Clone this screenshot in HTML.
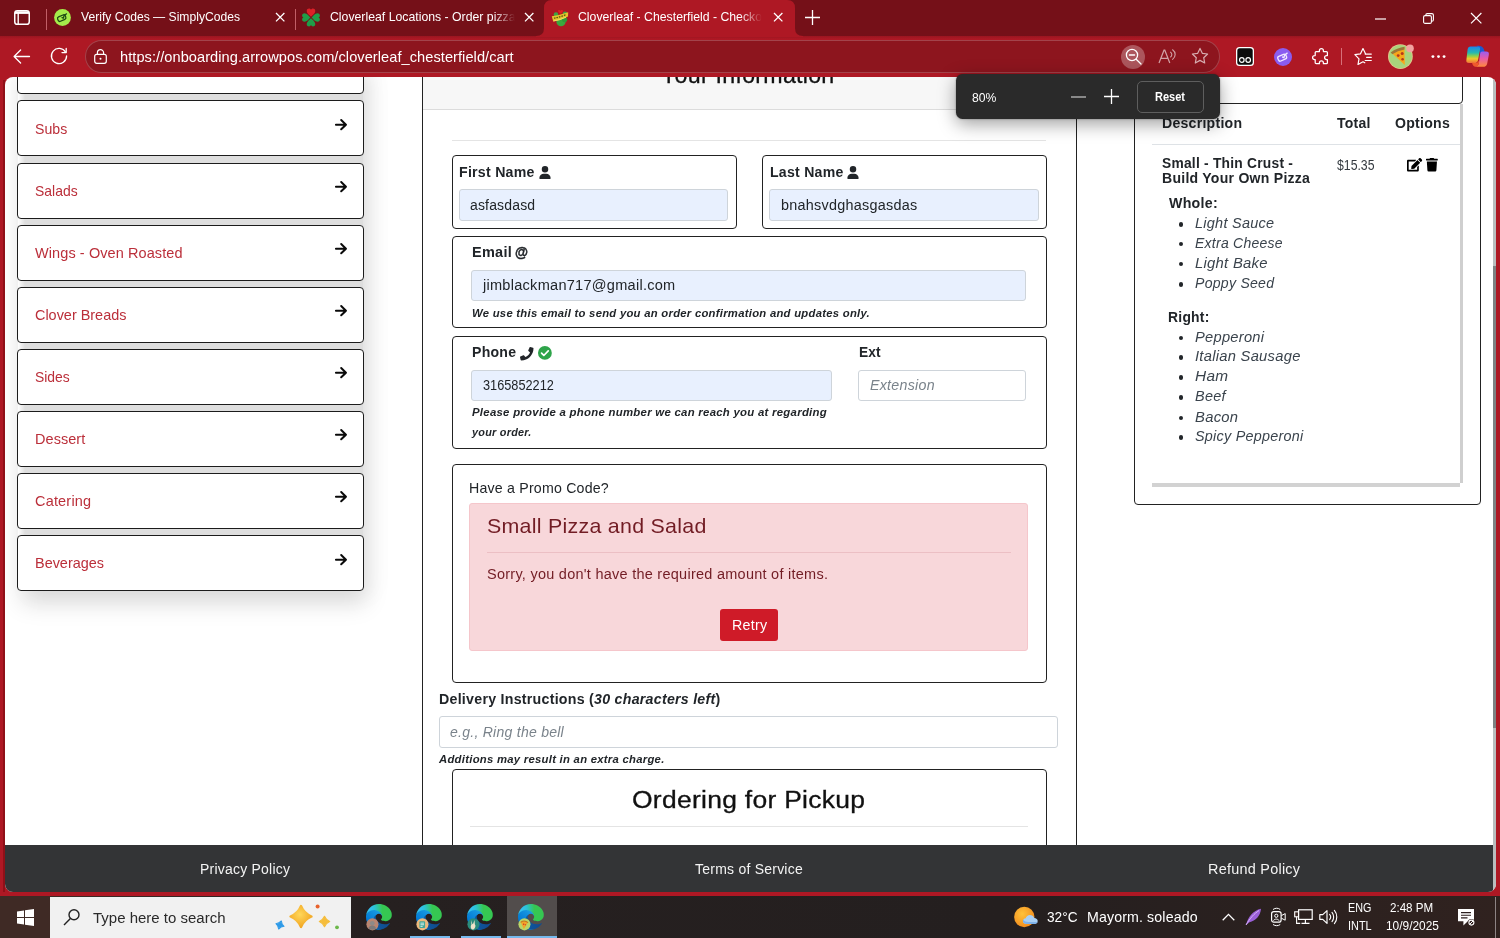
<!DOCTYPE html>
<html lang="en"><head><meta charset="utf-8"><title>Cloverleaf - Chesterfield - Checkout</title>
<style>
*{box-sizing:border-box;margin:0;padding:0}
html,body{width:1500px;height:938px;overflow:hidden}
body{background:#ae1824;font-family:"Liberation Sans",sans-serif;position:relative}
.a{position:absolute}
.t{position:absolute;white-space:nowrap;line-height:1;transform-origin:0 0}
.card{position:absolute;background:#fff;border:1px solid #222;border-radius:4px}
.menu{position:absolute;background:#fff;border:1.2px solid #1c1c1c;border-radius:4px;}
.inp{position:absolute;border:1px solid #ced4da;border-radius:3px;background:#fff}
.af{background:#e8f0fe}
svg{position:absolute;overflow:visible}
</style></head><body>
<div class="a" style="left:0px;top:0px;width:1500px;height:36px;background:#751018"></div>
<div class="a" style="left:0px;top:36px;width:1500px;height:41px;background:linear-gradient(180deg,#9a1520 0,#ae1824 3px)"></div>
<svg style="left:536px;top:0" width="268" height="37" viewBox="0 0 268 37"><path d="M0 37 L0 36 Q8 36 8 28 L8 8 Q8 0 16 0 L251 0 Q259 0 259 8 L259 28 Q259 36 267 36 L267 37 Z" fill="#ae1824"/></svg>
<svg style="left:14px;top:10px" width="16" height="15" viewBox="0 0 16 15"><rect x="0.75" y="0.75" width="14.5" height="13.5" rx="2.6" fill="none" stroke="#fff" stroke-width="1.5"/><path d="M1 2.600h14" stroke="#fff" stroke-width="2.600" fill="none"/><path d="M4.200 3v11" stroke="#fff" stroke-width="1.400" fill="none"/></svg>
<div class="a" style="left:46.1px;top:8.5px;width:1.2px;height:21px;background:rgba(255,160,170,.55)"></div>
<div class="a" style="left:295px;top:8.5px;width:1.2px;height:21px;background:rgba(255,160,170,.55)"></div>
<svg style="left:53.600px;top:9px" width="17" height="17" viewBox="0 0 17 17"><circle cx="8.500" cy="8.500" r="8.400" fill="#a5ec4b"/><g transform="rotate(-24 8 9)" fill="none" stroke="#1c4713" stroke-width="1.250" stroke-linejoin="round" stroke-linecap="round"><rect x="3.600" y="6.600" width="8.200" height="4.800" rx="1.700"/><path d="M8.200 8.600l1 1.100 1.900-2.300M11.600 7.600l2.200-.6"/></g></svg>
<span class="t" style="left:80.5px;top:11.0px;font-size:12.8px;color:#fff;letter-spacing:0.00px;transform:scaleX(0.9472);">Verify Codes — SimplyCodes</span>
<svg style="left:275.8px;top:13.3px" width="8.4" height="8.4" viewBox="0 0 8.4 8.4"><path d="M0 0L8.4 8.4M8.4 0L0 8.4" stroke="#fff" stroke-width="1.3" fill="none"/></svg>
<svg style="left:524.8px;top:13.3px" width="8.4" height="8.4" viewBox="0 0 8.4 8.4"><path d="M0 0L8.4 8.4M8.4 0L0 8.4" stroke="#fff" stroke-width="1.3" fill="none"/></svg>
<svg style="left:773.8px;top:13.3px" width="8.4" height="8.4" viewBox="0 0 8.4 8.4"><path d="M0 0L8.4 8.4M8.4 0L0 8.4" stroke="#fff" stroke-width="1.3" fill="none"/></svg>
<svg style="left:300px;top:6px" width="22" height="22" viewBox="-11 -11.200 22 22"><path d="M0 0C-1.500-1.500-4.300-3.500-4.300-5.800C-4.300-7.600-2.900-8.300-2-8.300C-1-8.300-.3-7.700 0-6.900C.3-7.700 1-8.300 2-8.300C2.900-8.300 4.300-7.600 4.300-5.800C4.300-3.500 1.500-1.500 0 0Z" fill="#dc2028" transform="translate(0 -.5)"/><path d="M0 0C-1.500-1.500-4.300-3.500-4.300-5.800C-4.300-7.600-2.900-8.300-2-8.300C-1-8.300-.3-7.700 0-6.900C.3-7.700 1-8.300 2-8.300C2.900-8.300 4.300-7.600 4.300-5.800C4.300-3.500 1.500-1.500 0 0Z" fill="#1f9d48" transform="translate(-.6 .3) rotate(-90)"/><path d="M0 0C-1.500-1.500-4.300-3.500-4.300-5.800C-4.300-7.600-2.900-8.300-2-8.300C-1-8.300-.3-7.700 0-6.900C.3-7.700 1-8.300 2-8.300C2.900-8.300 4.300-7.600 4.300-5.800C4.300-3.500 1.500-1.500 0 0Z" fill="#1f9d48" transform="translate(.6 .3) rotate(90)"/><path d="M0 0C-1.500-1.500-4.300-3.500-4.300-5.800C-4.300-7.600-2.900-8.300-2-8.300C-1-8.300-.3-7.700 0-6.900C.3-7.700 1-8.300 2-8.300C2.900-8.300 4.300-7.600 4.300-5.800C4.300-3.500 1.500-1.500 0 0Z" fill="#1f9d48" transform="translate(0 1) rotate(180)"/></svg>
<span class="t" style="left:329.5px;top:11.0px;font-size:12.8px;color:#fff;letter-spacing:0.00px;transform:scaleX(0.9588);-webkit-mask-image:linear-gradient(90deg,#000 88%,transparent 100%);">Cloverleaf Locations - Order pizza</span>
<svg style="left:551px;top:8px" width="18" height="19" viewBox="0 0 18 19"><path d="M9.500 2.800c-.8-1.400-2.600-1-2.400.4.200 1.200 2.400 2.400 2.400 2.400s2.200-1.200 2.400-2.400c.2-1.400-1.600-1.800-2.400-.4z" fill="#e2201f"/><circle cx="5" cy="6.600" r="2.300" fill="#3fa544"/><circle cx="14" cy="5.600" r="2.200" fill="#3fa544"/><ellipse cx="10" cy="14" rx="4.600" ry="4.200" fill="#3aa83e"/><circle cx="13.600" cy="11.600" r="2.600" fill="#2f9a3a"/><path d="M.8 8.200Q9 7 17.200 4.200L17 8.600Q10 12.600 2.200 13.400Z" fill="#e3c52b"/><path d="M3 10.200Q9 9 15.500 6.600" stroke="#5d5313" stroke-width="1.300" stroke-dasharray="1.600 1" fill="none"/><path d="M2.600 13Q9 12 15 9.200" stroke="#f4e36a" stroke-width=".9" fill="none"/></svg>
<span class="t" style="left:578.0px;top:11.0px;font-size:12.8px;color:#fff;letter-spacing:0.00px;transform:scaleX(0.9582);-webkit-mask-image:linear-gradient(90deg,#000 88%,transparent 100%);">Cloverleaf - Chesterfield - Checko</span>
<svg style="left:805px;top:10px" width="15" height="15" viewBox="0 0 15 15"><path d="M7.500 0v15M0 7.500h15" stroke="#fff" stroke-width="1.300"/></svg>
<svg style="left:1375px;top:18px" width="11" height="2" viewBox="0 0 11 2"><path d="M0 1h11" stroke="#fff" stroke-width="1.200"/></svg>
<svg style="left:1423px;top:13px" width="11" height="11" viewBox="0 0 11 11"><rect x=".6" y="2.600" width="7.800" height="7.800" rx="1.500" fill="none" stroke="#fff" stroke-width="1.100"/><path d="M2.800 2.600V2.100A1.500 1.500 0 0 1 4.300.6H8.900A1.500 1.500 0 0 1 10.400 2.100V6.700A1.500 1.500 0 0 1 8.900 8.200H8.400" fill="none" stroke="#fff" stroke-width="1.100"/></svg>
<svg style="left:1471.3px;top:13.3px" width="10.4" height="10.4" viewBox="0 0 10.4 10.4"><path d="M0 0L10.4 10.4M10.4 0L0 10.4" stroke="#fff" stroke-width="1.2" fill="none"/></svg>
<svg style="left:13px;top:49px" width="17" height="15" viewBox="0 0 17 15"><path d="M16.500 7.500H1.200M7.600 1L1.100 7.500 7.600 14" fill="none" stroke="#fff" stroke-width="1.300" stroke-linecap="round" stroke-linejoin="round"/></svg>
<svg style="left:50px;top:47px" width="18" height="18" viewBox="0 0 18 18"><path d="M15.600 5.200A7.600 7.600 0 1 0 16.600 9" fill="none" stroke="#fff" stroke-width="1.300" stroke-linecap="round"/><path d="M16.200 1.400V5.600H12" fill="none" stroke="#fff" stroke-width="1.300" stroke-linecap="round" stroke-linejoin="round"/></svg>
<div class="a" style="left:85px;top:40px;width:1135px;height:33px;background:#8d151e;border-radius:16.5px;border:1px solid rgba(255,255,255,.2)"></div>
<svg style="left:94px;top:49px" width="13" height="15" viewBox="0 0 13 15"><rect x=".7" y="5.400" width="11.600" height="8.900" rx="2" fill="none" stroke="#fff" stroke-width="1.200"/><path d="M3.400 5.400V3.800a3.100 3.100 0 0 1 6.200 0v1.600" fill="none" stroke="#fff" stroke-width="1.200"/><circle cx="6.500" cy="9.800" r="1" fill="#fff"/></svg>
<span class="t" style="left:120.0px;top:49.6px;font-size:14.6px;color:#fff;letter-spacing:0.06px;transform:scaleX(0.9999);">https://onboarding.arrowpos.com/cloverleaf_chesterfield/cart</span>
<div class="a" style="left:1121px;top:44.5px;width:24px;height:24px;background:rgba(255,255,255,.28);border-radius:12px"></div>
<svg style="left:1125px;top:48px" width="17" height="17" viewBox="0 0 17 17"><circle cx="7" cy="7" r="5.600" fill="none" stroke="#fff" stroke-width="1.300"/><path d="M11.200 11.200L16 16M4.400 7h5.200" stroke="#fff" stroke-width="1.300" stroke-linecap="round"/></svg>
<svg style="left:1158px;top:48px" width="19" height="16" viewBox="0 0 19 16"><path d="M1 15L6 2.200h.8L11.800 15M2.800 10.400h7.200" fill="none" stroke="rgba(255,255,255,.6)" stroke-width="1.200"/><path d="M12.600 4.200c1.600 1 1.600 3.600 0 4.800M14.600 1.800c3.400 2.400 3.400 7.200 0 9.600" fill="none" stroke="rgba(255,255,255,.6)" stroke-width="1.100" stroke-linecap="round"/></svg>
<svg style="left:1191px;top:47px" width="18" height="18" viewBox="0 0 18 18"><path d="M9 1.400l2.300 4.900 5.300.7-3.900 3.700 1 5.300L9 13.400 4.300 16l1-5.300L1.400 7l5.300-.7z" fill="none" stroke="rgba(255,255,255,.65)" stroke-width="1.200" stroke-linejoin="round"/></svg>
<svg style="left:1236px;top:47px" width="18" height="19" viewBox="0 0 18 19"><rect width="18" height="19" rx="3.500" fill="#fff"/><rect x="1.300" y="1.300" width="15.400" height="16.400" rx="2.500" fill="#0c0c0c"/><circle cx="5.800" cy="13" r="2.300" fill="#0c0c0c" stroke="#fff" stroke-width="1.200"/><circle cx="12.200" cy="13" r="2.300" fill="#0c0c0c" stroke="#fff" stroke-width="1.200"/></svg>
<svg style="left:1274px;top:47.500px" width="18" height="18" viewBox="0 0 17 17"><circle cx="8.500" cy="8.500" r="8.500" fill="#8a5cf0"/><g transform="rotate(-24 8 9)" fill="none" stroke="#f1e9ff" stroke-width="1.250" stroke-linejoin="round" stroke-linecap="round"><rect x="3.600" y="6.600" width="8.200" height="4.800" rx="1.700"/><path d="M8.200 8.600l1 1.100 1.900-2.300M11.600 7.600l2.200-.6"/></g></svg>
<svg style="left:1312.3px;top:48px" width="18" height="18" viewBox="0 0 18 18"><g transform="translate(17.500 0) scale(-1 1)"><path d="M6.600 3.200a2 2 0 0 1 4 0v.8h3.200a1 1 0 0 1 1 1v3h.6a2 2 0 0 1 0 4h-.6v3.200a1 1 0 0 1-1 1h-3.200v-.8a2 2 0 0 0-4 0v.8H3.600a1 1 0 0 1-1-1V12h.8a2 2 0 0 0 0-4h-.8V5a1 1 0 0 1 1-1h3z" fill="none" stroke="#fff" stroke-width="1.250" stroke-linejoin="round" transform="translate(-.5 -.5)"/></g></svg>
<div class="a" style="left:1341.2px;top:48px;width:1px;height:17px;background:rgba(255,200,205,.5)"></div>
<svg style="left:1354px;top:47px" width="19" height="19" viewBox="1354 47 19 19"><path d="M1365.500 53.700L1363 48.600L1360.500 53.800L1354.900 54.700L1359 58.800L1358 64.500L1363 61.800L1364.800 62.800" fill="none" stroke="#fff" stroke-width="1.200" stroke-linejoin="round" stroke-linecap="round"/><path d="M1365.200 54.100H1371.300M1366.600 57.300H1371.300M1365.200 60.500H1371.300" stroke="#fff" stroke-width="1.200" stroke-linecap="round"/></svg>
<svg style="left:1387px;top:43px" width="28" height="27" viewBox="0 0 28 27"><circle cx="13.400" cy="13.600" r="12.400" fill="#e4c48c"/><circle cx="13.400" cy="13.600" r="11.500" fill="#a8d47c"/><path d="M4.200 9.600L17.400 4.600 17.800 22z" fill="#f7a71b"/><path d="M3.600 9.400Q10 5 17.600 3.800L17.500 6.600Q10.500 7.600 5.400 11.200z" fill="#9c7638"/><circle cx="15.200" cy="10.400" r="1.500" fill="#b5381c"/><circle cx="11.200" cy="12.600" r="1.400" fill="#b5381c"/><circle cx="15.600" cy="16.200" r="1.300" fill="#b5381c"/><circle cx="23" cy="5.400" r="3.800" fill="#f2a3a0"/></svg>
<svg style="left:1430.500px;top:55.200px" width="15" height="3.200" viewBox="0 0 15 3.200"><circle cx="1.900" cy="1.600" r="1.450" fill="#fff"/><circle cx="7.500" cy="1.600" r="1.450" fill="#fff"/><circle cx="13.100" cy="1.600" r="1.450" fill="#fff"/></svg>
<svg style="left:1465px;top:45px" width="25" height="23" viewBox="0 0 25 23"><defs><linearGradient id="cp1" x1="0" y1="0" x2="0" y2="1"><stop offset="0" stop-color="#1b86ea"/><stop offset=".38" stop-color="#27b9b0"/><stop offset=".58" stop-color="#8fd04a"/><stop offset=".74" stop-color="#f2c62c"/><stop offset="1" stop-color="#f0703a"/></linearGradient><linearGradient id="cp2" x1="0" y1="0" x2="0" y2="1"><stop offset="0" stop-color="#9a5cf0"/><stop offset=".45" stop-color="#e85aa8"/><stop offset="1" stop-color="#ff8a3c"/></linearGradient></defs><path d="M11.500.8Q17.500-.2 19 4.600L20.200 9H15.400L14 4Q13.500 1.800 11.500.8z" fill="#1a5ad2"/><path d="M5.600 1.600H12.500Q15.600 1.600 15 4.800L13 15.200Q12.400 18 9.400 18H4Q.8 18 1.400 14.800L2.600 4.600Q3 1.600 5.600 1.600z" fill="url(#cp1)"/><path d="M16.800 6.600H21Q24.500 6.600 23.800 10L22.200 18.400Q21.500 21.800 18 21.800H9.500Q13.200 21.400 13.800 18.200L15 9.200Q15.300 6.600 16.800 6.600z" fill="url(#cp2)"/><path d="M7 17.800Q8 21.600 10.500 21.800Q13.400 21.400 13.800 18.200L14.200 15.500Q13 18 10 18z" fill="#f05a2c"/></svg>
<div class="a" style="left:3.2px;top:80px;width:1.8px;height:812px;background:#8f1018"></div>
<div class="a" style="left:5px;top:77px;width:1491px;height:815px;background:#fff;border-radius:8px 8px 8px 8px;overflow:hidden">
<div class="a" style="left:-5px;top:-77px;width:1500px;height:938px">
<div class="a" style="left:18px;top:60px;width:345px;height:530px;background:linear-gradient(90deg,#fff 0,#dedede 7px);box-shadow:3px 14px 22px rgba(0,0,0,.13),9px 5px 24px rgba(0,0,0,.04)"></div>
<div class="menu" style="left:17px;top:38.3px;width:347px;height:56px;"></div>
<div class="menu" style="left:17px;top:100.4px;width:347px;height:56px;"></div>
<div class="menu" style="left:17px;top:162.5px;width:347px;height:56px;"></div>
<div class="menu" style="left:17px;top:224.6px;width:347px;height:56px;"></div>
<div class="menu" style="left:17px;top:286.7px;width:347px;height:56px;"></div>
<div class="menu" style="left:17px;top:348.8px;width:347px;height:56px;"></div>
<div class="menu" style="left:17px;top:410.9px;width:347px;height:56px;"></div>
<div class="menu" style="left:17px;top:473.0px;width:347px;height:56px;"></div>
<div class="menu" style="left:17px;top:535.1px;width:347px;height:56px;"></div>
<span class="t" style="left:35.2px;top:121.5px;font-size:14.5px;color:#bb2f3a;letter-spacing:0.00px;transform:scaleX(0.9739);">Subs</span>
<svg style="left:334.6px;top:118.8px" width="12.2" height="11.3" viewBox="0 0 13 12"><path d="M1 6H11.400M6.600 1.100L11.700 6 6.600 10.900" fill="none" stroke="#0a0a0a" stroke-width="2.150" stroke-linecap="round" stroke-linejoin="round"/></svg>
<span class="t" style="left:35.2px;top:183.6px;font-size:14.5px;color:#bb2f3a;letter-spacing:0.00px;transform:scaleX(0.9607);">Salads</span>
<svg style="left:334.6px;top:180.9px" width="12.2" height="11.3" viewBox="0 0 13 12"><path d="M1 6H11.400M6.600 1.100L11.700 6 6.600 10.900" fill="none" stroke="#0a0a0a" stroke-width="2.150" stroke-linecap="round" stroke-linejoin="round"/></svg>
<span class="t" style="left:35.2px;top:245.7px;font-size:14.5px;color:#bb2f3a;letter-spacing:0.09px;transform:scaleX(0.9997);">Wings - Oven Roasted</span>
<svg style="left:334.6px;top:243.0px" width="12.2" height="11.3" viewBox="0 0 13 12"><path d="M1 6H11.400M6.600 1.100L11.700 6 6.600 10.900" fill="none" stroke="#0a0a0a" stroke-width="2.150" stroke-linecap="round" stroke-linejoin="round"/></svg>
<span class="t" style="left:35.2px;top:307.8px;font-size:14.5px;color:#bb2f3a;letter-spacing:0.00px;transform:scaleX(0.9948);">Clover Breads</span>
<svg style="left:334.6px;top:305.1px" width="12.2" height="11.3" viewBox="0 0 13 12"><path d="M1 6H11.400M6.600 1.100L11.700 6 6.600 10.900" fill="none" stroke="#0a0a0a" stroke-width="2.150" stroke-linecap="round" stroke-linejoin="round"/></svg>
<span class="t" style="left:35.2px;top:369.9px;font-size:14.5px;color:#bb2f3a;letter-spacing:0.00px;transform:scaleX(0.9592);">Sides</span>
<svg style="left:334.6px;top:367.2px" width="12.2" height="11.3" viewBox="0 0 13 12"><path d="M1 6H11.400M6.600 1.100L11.700 6 6.600 10.900" fill="none" stroke="#0a0a0a" stroke-width="2.150" stroke-linecap="round" stroke-linejoin="round"/></svg>
<span class="t" style="left:35.2px;top:432.0px;font-size:14.5px;color:#bb2f3a;letter-spacing:0.05px;transform:scaleX(0.9995);">Dessert</span>
<svg style="left:334.6px;top:429.3px" width="12.2" height="11.3" viewBox="0 0 13 12"><path d="M1 6H11.400M6.600 1.100L11.700 6 6.600 10.900" fill="none" stroke="#0a0a0a" stroke-width="2.150" stroke-linecap="round" stroke-linejoin="round"/></svg>
<span class="t" style="left:35.2px;top:494.1px;font-size:14.5px;color:#bb2f3a;letter-spacing:0.20px;transform:scaleX(0.9982);">Catering</span>
<svg style="left:334.6px;top:491.4px" width="12.2" height="11.3" viewBox="0 0 13 12"><path d="M1 6H11.400M6.600 1.100L11.700 6 6.600 10.900" fill="none" stroke="#0a0a0a" stroke-width="2.150" stroke-linecap="round" stroke-linejoin="round"/></svg>
<span class="t" style="left:35.2px;top:556.2px;font-size:14.5px;color:#bb2f3a;letter-spacing:0.00px;transform:scaleX(0.9953);">Beverages</span>
<svg style="left:334.6px;top:553.5px" width="12.2" height="11.3" viewBox="0 0 13 12"><path d="M1 6H11.400M6.600 1.100L11.700 6 6.600 10.900" fill="none" stroke="#0a0a0a" stroke-width="2.150" stroke-linecap="round" stroke-linejoin="round"/></svg>
<div class="card" style="left:421.5px;top:40px;width:655px;height:900px;border-radius:4px;"></div>
<div class="a" style="left:422.5px;top:41px;width:653px;height:69px;background:#f7f7f7;border-bottom:1px solid #dcdcdc"></div>
<span class="t" style="left:661.0px;top:64.0px;font-size:23px;color:#111;letter-spacing:0.25px;transform:scaleX(1.0092);-webkit-text-stroke:.3px #111;">Your Information</span>
<div class="a" style="left:452px;top:140px;width:594px;height:1px;background:#e4e4e4"></div>
<div class="card" style="left:452px;top:155px;width:285px;height:73.5px;"></div>
<span class="t" style="left:459.3px;top:165.9px;font-size:13.8px;color:#212529;letter-spacing:0.25px;transform:scaleX(1.0256);font-weight:700;">First Name</span>
<svg style="left:539.3px;top:166px" width="12" height="13" viewBox="0 0 448 512"><path fill="#212529" d="M224 256A128 128 0 1 0 224 0a128 128 0 1 0 0 256zm-45.700 48C79.800 304 0 383.800 0 482.300C0 498.700 13.300 512 29.700 512H418.300c16.400 0 29.700-13.300 29.700-29.700C448 383.800 368.200 304 269.700 304H178.300z"/></svg>
<div class="inp af" style="left:459.3px;top:189.3px;width:269px;height:31.5px;"></div>
<span class="t" style="left:470.3px;top:198.1px;font-size:14px;color:#212529;letter-spacing:0.17px;transform:scaleX(0.9987);">asfasdasd</span>
<div class="card" style="left:762px;top:155px;width:284.5px;height:73.5px;"></div>
<span class="t" style="left:769.5px;top:165.9px;font-size:13.8px;color:#212529;letter-spacing:0.25px;transform:scaleX(1.0204);font-weight:700;">Last Name</span>
<svg style="left:847px;top:166px" width="12" height="13" viewBox="0 0 448 512"><path fill="#212529" d="M224 256A128 128 0 1 0 224 0a128 128 0 1 0 0 256zm-45.700 48C79.800 304 0 383.800 0 482.300C0 498.700 13.300 512 29.700 512H418.300c16.400 0 29.700-13.300 29.700-29.700C448 383.800 368.200 304 269.700 304H178.300z"/></svg>
<div class="inp af" style="left:769.3px;top:189.3px;width:269.5px;height:31.5px;"></div>
<span class="t" style="left:781.0px;top:198.1px;font-size:14px;color:#212529;letter-spacing:0.25px;transform:scaleX(1.0287);">bnahsvdghasgasdas</span>
<div class="card" style="left:452px;top:235.5px;width:594.5px;height:92.7px;"></div>
<span class="t" style="left:472.0px;top:245.9px;font-size:13.8px;color:#212529;letter-spacing:0.25px;transform:scaleX(1.0509);font-weight:700;">Email</span>
<span class="t" style="left:515.0px;top:245.2px;font-size:14.6px;color:#212529;letter-spacing:0.00px;transform:scaleX(0.9133);font-weight:700;-webkit-text-stroke:.45px #212529;">@</span>
<div class="inp af" style="left:471.2px;top:269.5px;width:554.5px;height:31.8px;"></div>
<span class="t" style="left:482.7px;top:278.1px;font-size:14px;color:#212529;letter-spacing:0.25px;transform:scaleX(1.0396);">jimblackman717@gmail.com</span>
<span class="t" style="left:472.0px;top:307.5px;font-size:10.5px;color:#212529;letter-spacing:0.25px;transform:scaleX(1.0750);font-weight:700;font-style:italic;">We use this email to send you an order confirmation and updates only.</span>
<div class="card" style="left:452px;top:336.3px;width:594.5px;height:112.6px;"></div>
<span class="t" style="left:472.0px;top:346.0px;font-size:13.8px;color:#212529;letter-spacing:0.25px;transform:scaleX(1.0202);font-weight:700;">Phone</span>
<svg style="left:520.400px;top:346.500px" width="13.500" height="13.500" viewBox="0 0 512 512"><path fill="#212529" d="M493.400 24.600l-104-24c-11.300-2.600-22.900 3.300-27.500 13.900l-48 112c-4.200 9.800-1.400 21.300 6.900 28l60.600 49.600c-36 76.700-98.900 140.500-177.200 177.200l-49.600-60.600c-6.800-8.300-18.200-11.100-28-6.900l-112 48C3.900 366.500-2 378.100.6 389.400l24 104C27.100 504.200 36.700 512 48 512c256.100 0 464-207.500 464-464 0-11.200-7.700-20.900-18.600-23.400z"/></svg>
<svg style="left:538px;top:346px" width="13.800" height="13.800" viewBox="0 0 14 14"><circle cx="7" cy="7" r="7" fill="#2ea44a"/><path d="M3.600 7.300l2.300 2.300 4.500-4.700" fill="none" stroke="#fff" stroke-width="1.700" stroke-linecap="round" stroke-linejoin="round"/></svg>
<div class="inp af" style="left:471.2px;top:370.4px;width:361.2px;height:30.6px;"></div>
<span class="t" style="left:482.7px;top:378.4px;font-size:14px;color:#212529;letter-spacing:0.00px;transform:scaleX(0.9091);">3165852212</span>
<span class="t" style="left:472.0px;top:407.1px;font-size:10.5px;color:#212529;letter-spacing:0.25px;transform:scaleX(1.0839);font-weight:700;font-style:italic;">Please provide a phone number we can reach you at regarding</span>
<span class="t" style="left:472.0px;top:427.1px;font-size:10.5px;color:#212529;letter-spacing:0.25px;transform:scaleX(1.0328);font-weight:700;font-style:italic;">your order.</span>
<span class="t" style="left:858.8px;top:346.3px;font-size:13.8px;color:#212529;letter-spacing:0.05px;transform:scaleX(0.9989);font-weight:700;">Ext</span>
<div class="inp" style="left:858px;top:370.4px;width:168px;height:30.7px;"></div>
<span class="t" style="left:869.6px;top:378.4px;font-size:14px;color:#7a838b;letter-spacing:0.25px;transform:scaleX(1.0167);font-style:italic;">Extension</span>
<div class="card" style="left:452px;top:463.5px;width:594.5px;height:219px;"></div>
<span class="t" style="left:469.3px;top:481.1px;font-size:14.2px;color:#212529;letter-spacing:0.20px;transform:scaleX(0.9993);">Have a Promo Code?</span>
<div class="a" style="left:469.2px;top:502.7px;width:559.3px;height:148.2px;background:#f8d7da;border:1px solid #f5c6cb;border-radius:3px"></div>
<span class="t" style="left:486.8px;top:515.6px;font-size:20.2px;color:#721c24;letter-spacing:0.25px;transform:scaleX(1.0597);">Small Pizza and Salad</span>
<div class="a" style="left:486.8px;top:551.5px;width:524.5px;height:1px;background:#ecbfc4"></div>
<span class="t" style="left:486.8px;top:567.4px;font-size:14px;color:#721c24;letter-spacing:0.25px;transform:scaleX(1.0353);">Sorry, you don't have the required amount of items.</span>
<div class="a" style="left:720px;top:609px;width:57.5px;height:32px;background:#cf1b28;border-radius:3px"></div>
<span class="t" style="left:731.5px;top:618.1px;font-size:14px;color:#fff;letter-spacing:0.25px;transform:scaleX(1.0172);">Retry</span>
<span class="t" style="left:439.2px;top:693.2px;font-size:13.8px;color:#212529;letter-spacing:0.25px;transform:scaleX(1.0291);font-weight:700;">Delivery Instructions (<i>30 characters left</i>)</span>
<div class="inp" style="left:439.2px;top:716.4px;width:619.3px;height:31.4px;"></div>
<span class="t" style="left:449.5px;top:724.9px;font-size:14px;color:#7a838b;letter-spacing:0.25px;transform:scaleX(1.0025);font-style:italic;">e.g., Ring the bell</span>
<span class="t" style="left:439.2px;top:754.3px;font-size:10.5px;color:#212529;letter-spacing:0.25px;transform:scaleX(1.0765);font-weight:700;font-style:italic;">Additions may result in an extra charge.</span>
<div class="card" style="left:452px;top:768.7px;width:594.5px;height:200px;"></div>
<span class="t" style="left:632.0px;top:788.5px;font-size:23px;color:#111;letter-spacing:0.25px;transform:scaleX(1.1499);-webkit-text-stroke:.3px #111;">Ordering for Pickup</span>
<div class="a" style="left:469.5px;top:826px;width:558.5px;height:1px;background:#e4e4e4"></div>
<div class="card" style="left:1134px;top:40px;width:347px;height:465px;border-radius:4px;"></div>
<div class="card" style="left:1152px;top:40px;width:311px;height:63.5px;border-radius:0 0 4px 4px;"></div>
<span class="t" style="left:1161.8px;top:117.0px;font-size:13.8px;color:#212529;letter-spacing:0.25px;transform:scaleX(1.0209);font-weight:700;">Description</span>
<span class="t" style="left:1336.6px;top:117.0px;font-size:13.8px;color:#212529;letter-spacing:0.25px;transform:scaleX(1.0154);font-weight:700;">Total</span>
<span class="t" style="left:1394.9px;top:117.0px;font-size:13.8px;color:#212529;letter-spacing:0.25px;transform:scaleX(1.0209);font-weight:700;">Options</span>
<div class="a" style="left:1152px;top:144px;width:307.5px;height:1px;background:#dee2e6"></div>
<div class="a" style="left:1459.5px;top:104px;width:3.5px;height:379px;background:#cfcfcf"></div>
<div class="a" style="left:1152px;top:483.4px;width:308px;height:3.6px;background:#d2d2d2"></div>
<span class="t" style="left:1161.8px;top:156.5px;font-size:13.8px;color:#212529;letter-spacing:0.24px;transform:scaleX(0.9991);font-weight:700;">Small - Thin Crust -</span>
<span class="t" style="left:1161.8px;top:172.3px;font-size:13.8px;color:#212529;letter-spacing:0.25px;transform:scaleX(1.0182);font-weight:700;">Build Your Own Pizza</span>
<span class="t" style="left:1336.6px;top:158.1px;font-size:14px;color:#343a40;letter-spacing:0.00px;transform:scaleX(0.8756);">$15.35</span>
<svg style="left:1407.2px;top:158px" width="15.200" height="13.500" viewBox="0 0 576 512"><path fill="#000" d="M402.600 83.200l90.200 90.200c3.800 3.800 3.800 10 0 13.800L274.400 405.600l-92.800 10.300c-12.400 1.400-22.900-9.100-21.500-21.500l10.300-92.800L388.800 83.200c3.800-3.800 10-3.800 13.800 0zm162-22.900l-48.800-48.800c-15.200-15.200-39.900-15.200-55.200 0l-35.400 35.400c-3.800 3.800-3.800 10 0 13.800l90.200 90.200c3.800 3.800 10 3.800 13.800 0l35.400-35.400c15.200-15.300 15.200-40 0-55.200zM384 346.200V448H64V128h229.800c3.200 0 6.200-1.300 8.500-3.500l40-40c7.600-7.600 2.200-20.500-8.500-20.500H48C21.500 64 0 85.500 0 112v352c0 26.500 21.500 48 48 48h352c26.500 0 48-21.500 48-48V306.200c0-10.700-12.900-16-20.500-8.500l-40 40c-2.200 2.300-3.500 5.300-3.500 8.500z"/></svg>
<svg style="left:1425.800px;top:158px" width="11.800" height="13.500" viewBox="0 0 448 512"><path fill="#000" d="M432 32H312l-9.400-18.700A24 24 0 0 0 281.100 0H166.800a23.720 23.720 0 0 0-21.400 13.300L136 32H16A16 16 0 0 0 0 48v32a16 16 0 0 0 16 16h416a16 16 0 0 0 16-16V48a16 16 0 0 0-16-16zM53.200 467a48 48 0 0 0 47.900 45h245.800a48 48 0 0 0 47.900-45L416 128H32z"/></svg>
<span class="t" style="left:1168.6px;top:196.8px;font-size:13.8px;color:#212529;letter-spacing:0.25px;transform:scaleX(1.0298);font-weight:700;">Whole:</span>
<span class="t" style="left:1168.4px;top:310.8px;font-size:13.8px;color:#212529;letter-spacing:0.25px;transform:scaleX(1.0062);font-weight:700;">Right:</span>
<div class="a" style="left:1178.5px;top:222.20000000000002px;width:4.6px;height:4.6px;background:#212529;border-radius:50%"></div>
<span class="t" style="left:1195.2px;top:217.1px;font-size:13.8px;color:#3a434c;letter-spacing:0.25px;transform:scaleX(1.0486);font-style:italic;">Light Sauce</span>
<div class="a" style="left:1178.5px;top:241.9px;width:4.6px;height:4.6px;background:#212529;border-radius:50%"></div>
<span class="t" style="left:1195.2px;top:236.8px;font-size:13.8px;color:#3a434c;letter-spacing:0.25px;transform:scaleX(1.0139);font-style:italic;">Extra Cheese</span>
<div class="a" style="left:1178.5px;top:261.7px;width:4.6px;height:4.6px;background:#212529;border-radius:50%"></div>
<span class="t" style="left:1195.2px;top:256.6px;font-size:13.8px;color:#3a434c;letter-spacing:0.25px;transform:scaleX(1.0753);font-style:italic;">Light Bake</span>
<div class="a" style="left:1178.5px;top:282.4px;width:4.6px;height:4.6px;background:#212529;border-radius:50%"></div>
<span class="t" style="left:1195.2px;top:277.3px;font-size:13.8px;color:#3a434c;letter-spacing:0.25px;transform:scaleX(1.0208);font-style:italic;">Poppy Seed</span>
<div class="a" style="left:1178.5px;top:335.7px;width:4.6px;height:4.6px;background:#212529;border-radius:50%"></div>
<span class="t" style="left:1195.2px;top:330.6px;font-size:13.8px;color:#3a434c;letter-spacing:0.25px;transform:scaleX(1.0636);font-style:italic;">Pepperoni</span>
<div class="a" style="left:1178.5px;top:355.29999999999995px;width:4.6px;height:4.6px;background:#212529;border-radius:50%"></div>
<span class="t" style="left:1195.2px;top:350.2px;font-size:13.8px;color:#3a434c;letter-spacing:0.25px;transform:scaleX(1.0680);font-style:italic;">Italian Sausage</span>
<div class="a" style="left:1178.5px;top:375.4px;width:4.6px;height:4.6px;background:#212529;border-radius:50%"></div>
<span class="t" style="left:1195.2px;top:370.3px;font-size:13.8px;color:#3a434c;letter-spacing:0.25px;transform:scaleX(1.1141);font-style:italic;">Ham</span>
<div class="a" style="left:1178.5px;top:395.0px;width:4.6px;height:4.6px;background:#212529;border-radius:50%"></div>
<span class="t" style="left:1195.2px;top:389.9px;font-size:13.8px;color:#3a434c;letter-spacing:0.25px;transform:scaleX(1.0480);font-style:italic;">Beef</span>
<div class="a" style="left:1178.5px;top:415.7px;width:4.6px;height:4.6px;background:#212529;border-radius:50%"></div>
<span class="t" style="left:1195.2px;top:410.6px;font-size:13.8px;color:#3a434c;letter-spacing:0.25px;transform:scaleX(1.0724);font-style:italic;">Bacon</span>
<div class="a" style="left:1178.5px;top:435.29999999999995px;width:4.6px;height:4.6px;background:#212529;border-radius:50%"></div>
<span class="t" style="left:1195.2px;top:430.2px;font-size:13.8px;color:#3a434c;letter-spacing:0.25px;transform:scaleX(1.0409);font-style:italic;">Spicy Pepperoni</span>
<div class="a" style="left:1493px;top:77px;width:3px;height:815px;background:#b9bdbe"></div>
<div class="a" style="left:1493px;top:266px;width:3px;height:462px;background:#7d8182"></div>
<div class="a" style="left:5px;top:845px;width:1488px;height:47px;background:#333436"></div>
<span class="t" style="left:199.5px;top:861.5px;font-size:14px;color:#f4f4f4;letter-spacing:0.23px;transform:scaleX(0.9987);">Privacy Policy</span>
<span class="t" style="left:695.0px;top:861.5px;font-size:14px;color:#f4f4f4;letter-spacing:0.24px;transform:scaleX(0.9989);">Terms of Service</span>
<span class="t" style="left:1207.7px;top:861.5px;font-size:14px;color:#f4f4f4;letter-spacing:0.25px;transform:scaleX(1.0297);">Refund Policy</span>
</div></div>
<div class="a" style="left:956px;top:74.1px;width:264px;height:44.8px;background:#2a2a2a;border-radius:6.500px;box-shadow:0 5px 18px rgba(0,0,0,.38),0 0 2px rgba(0,0,0,.4)"></div>
<span class="t" style="left:972.0px;top:90.9px;font-size:13.3px;color:#fff;letter-spacing:0.00px;transform:scaleX(0.9164);">80%</span>
<svg style="left:1071px;top:95.800px" width="15" height="2" viewBox="0 0 15 2"><path d="M0 1h15" stroke="#a9a9a9" stroke-width="1.500"/></svg>
<svg style="left:1103.900px;top:89.100px" width="15" height="15" viewBox="0 0 15 15"><path d="M7.500 0v15M0 7.500h15" stroke="#fff" stroke-width="1.300"/></svg>
<div class="a" style="left:1137px;top:80.6px;width:66.6px;height:32.6px;border:1px solid #5e5e5e;border-radius:5px;background:#2a2a2a"></div>
<span class="t" style="left:1155.0px;top:90.1px;font-size:13.2px;color:#fff;letter-spacing:0.00px;transform:scaleX(0.8351);font-weight:700;">Reset</span>
<div class="a" style="left:0px;top:896px;width:1500px;height:42px;background:linear-gradient(90deg,#3f2a25 0,#3f2a25 50px,#262020 360px,#241f1f 1000px,#30221f 1500px)"></div>
<div class="a" style="left:50px;top:897px;width:300.5px;height:41px;background:#f1f1f1"></div>
<svg style="left:16.500px;top:909px" width="17" height="17" viewBox="0 0 17 17"><path d="M0 2.400L7 1.400V8H0zM8 1.250L17 0V8H8zM0 9H7V15.600L0 14.600zM8 9H17V17L8 15.750z" fill="#fff"/></svg>
<svg style="left:63px;top:908px" width="18" height="18" viewBox="0 0 18 18"><circle cx="11" cy="6.800" r="5" fill="none" stroke="#222" stroke-width="1.400"/><path d="M7.400 10.600L1 17" stroke="#222" stroke-width="1.400"/></svg>
<span class="t" style="left:93.0px;top:910.2px;font-size:15.4px;color:#2a2a2a;letter-spacing:0.00px;transform:scaleX(0.9740);">Type here to search</span>
<svg style="left:0;top:0" width="1" height="1"><defs><radialGradient id="sg" cx=".45" cy=".4" r=".6"><stop offset="0" stop-color="#ffd75a"/><stop offset="1" stop-color="#f2a825"/></radialGradient></defs><path d="M301 906.0C303.142 911.145 306.355 914.358 311.5 916.5C306.355 918.642 303.142 921.855 301 927.0C298.858 921.855 295.645 918.642 290.5 916.5C295.645 914.358 298.858 911.145 301 906.0Z" fill="url(#sg)" stroke="url(#sg)" stroke-width="2.31" stroke-linejoin="round"/><path d="M324.5 916.3C325.5608 918.848 327.152 920.4392 329.7 921.5C327.152 922.5608 325.5608 924.152 324.5 926.7C323.4392 924.152 321.848 922.5608 319.3 921.5C321.848 920.4392 323.4392 918.848 324.5 916.3Z" fill="#f5bd3c" stroke="#f5bd3c" stroke-width="1.14" stroke-linejoin="round"/><g transform="rotate(18 280 925)"><path d="M280 920.7C280.8772 922.807 282.193 924.1228 284.3 925C282.193 925.8772 280.8772 927.193 280 929.3C279.1228 927.193 277.807 925.8772 275.7 925C277.807 924.1228 279.1228 922.807 280 920.7Z" fill="#2f9be8" stroke="#2f9be8" stroke-width="0.95" stroke-linejoin="round"/></g><circle cx="317.600" cy="906.600" r="2" fill="#e8622c"/><circle cx="337" cy="927.300" r="1.900" fill="#6cb84a"/></svg>
<div class="a" style="left:507px;top:896px;width:49.5px;height:42px;background:#524d4c"></div>
<div class="a" style="left:409.5px;top:935.5px;width:40.5px;height:2.5px;background:#76b9ed"></div>
<div class="a" style="left:460.5px;top:935.5px;width:40.5px;height:2.5px;background:#76b9ed"></div>
<div class="a" style="left:507px;top:935.5px;width:49.5px;height:2.5px;background:#76b9ed"></div>
<svg width="0" height="0" style="left:0;top:0"><defs><linearGradient id="ea" x1="63" y1="177" x2="241" y2="177" gradientUnits="userSpaceOnUse"><stop offset="0" stop-color="#0c59a4"/><stop offset="1" stop-color="#114a8b"/></linearGradient><linearGradient id="eb" x1="157" y1="99" x2="46" y2="220" gradientUnits="userSpaceOnUse"><stop offset="0" stop-color="#1b9de2"/><stop offset=".16" stop-color="#1595df"/><stop offset=".67" stop-color="#0680d7"/><stop offset="1" stop-color="#0078d4"/></linearGradient><radialGradient id="ec" cx="26" cy="47" r="205" gradientUnits="userSpaceOnUse"><stop offset="0" stop-color="#35c1f1"/><stop offset=".11" stop-color="#34c1ed"/><stop offset=".23" stop-color="#2fc2df"/><stop offset=".31" stop-color="#2bc3d2"/><stop offset=".67" stop-color="#36c752"/></radialGradient></defs></svg>
<svg style="left:365.8px;top:904.200px" width="25.800" height="26.200" viewBox="0 0 256 260"><path fill="url(#ea)" d="M231 190.500c-3.400 1.800-6.900 3.400-10.500 4.700a101.500 101.500 0 0 1-35.800 6.400c-47.200 0-88.300-32.500-88.300-74.100a31.400 31.400 0 0 1 16.400-27.300c-42.700 1.800-53.700 46.300-53.700 72.400 0 73.700 68 81.200 82.600 81.200 7.900 0 19.800-2.300 26.900-4.500l1.300-.4a128 128 0 0 0 66.400-52.700 4 4 0 0 0-5.300-5.700z"/><path fill="url(#eb)" d="M105.700 241.400a79.200 79.200 0 0 1-22.700-21.300 80.700 80.700 0 0 1 29.500-120c3.100-1.500 8.500-4.100 15.600-4a32.400 32.400 0 0 1 25.700 13 31.900 31.900 0 0 1 6.400 18.700c0-.2 24.500-79.900-80.300-79.900-44 0-80.200 41.800-80.200 78.400a130.600 130.600 0 0 0 12.100 56.200 128 128 0 0 0 156.400 67.100 75.500 75.500 0 0 1-62.400-8.200z"/><path fill="url(#ec)" d="M152.300 148.900c-.8 1-3.300 2.500-3.300 5.700 0 2.600 1.700 5.100 4.700 7.200 14.400 10 41.500 8.700 41.600 8.700a59.600 59.600 0 0 0 30.300-8.400 61.400 61.400 0 0 0 30.400-52.900c.3-22.400-8-37.300-11.300-43.900C223.500 24.100 177.600 0 128 0A128 128 0 0 0 0 126.200c.5-36.500 36.800-66 80-66 3.500 0 23.500.3 42 10.100 16.300 8.600 24.900 18.900 30.800 29.200 6.200 10.700 7.300 24.100 7.300 29.500s-2.700 13.300-7.800 19.900z"/><circle cx="64" cy="202" r="60" fill="#b98672"/><circle cx="62" cy="192" r="24" fill="#8e8a88"/><path d="M24 240a40 40 0 0 1 76 0a52 52 0 0 1-76 0z" fill="#7d7a7a"/></svg>
<svg style="left:416.4px;top:904.200px" width="25.800" height="26.200" viewBox="0 0 256 260"><path fill="url(#ea)" d="M231 190.500c-3.400 1.800-6.900 3.400-10.500 4.700a101.500 101.500 0 0 1-35.800 6.400c-47.200 0-88.300-32.500-88.300-74.100a31.400 31.400 0 0 1 16.400-27.300c-42.700 1.800-53.700 46.300-53.700 72.400 0 73.700 68 81.200 82.600 81.200 7.900 0 19.800-2.300 26.900-4.500l1.300-.4a128 128 0 0 0 66.400-52.700 4 4 0 0 0-5.300-5.700z"/><path fill="url(#eb)" d="M105.700 241.400a79.200 79.200 0 0 1-22.700-21.300 80.700 80.700 0 0 1 29.500-120c3.100-1.500 8.500-4.100 15.600-4a32.400 32.400 0 0 1 25.700 13 31.900 31.900 0 0 1 6.400 18.700c0-.2 24.500-79.900-80.300-79.900-44 0-80.200 41.800-80.200 78.400a130.600 130.600 0 0 0 12.100 56.200 128 128 0 0 0 156.400 67.100 75.500 75.500 0 0 1-62.400-8.200z"/><path fill="url(#ec)" d="M152.300 148.900c-.8 1-3.300 2.500-3.300 5.700 0 2.600 1.700 5.100 4.700 7.200 14.400 10 41.500 8.700 41.600 8.700a59.600 59.600 0 0 0 30.300-8.400 61.400 61.400 0 0 0 30.400-52.900c.3-22.400-8-37.300-11.300-43.900C223.500 24.100 177.600 0 128 0A128 128 0 0 0 0 126.200c.5-36.500 36.800-66 80-66 3.500 0 23.500.3 42 10.100 16.300 8.600 24.900 18.900 30.800 29.200 6.200 10.700 7.300 24.100 7.300 29.500s-2.700 13.300-7.800 19.900z"/><circle cx="64" cy="202" r="60" fill="#ecb97e"/><rect x="34" y="172" width="56" height="66" rx="8" fill="#3fa79a"/><path d="M44 190h36M44 206h36M44 222h22" stroke="#dff3ee" stroke-width="9"/></svg>
<svg style="left:467px;top:904.200px" width="25.800" height="26.200" viewBox="0 0 256 260"><path fill="url(#ea)" d="M231 190.500c-3.400 1.800-6.900 3.400-10.500 4.700a101.500 101.500 0 0 1-35.800 6.400c-47.200 0-88.300-32.500-88.300-74.100a31.400 31.400 0 0 1 16.400-27.300c-42.700 1.800-53.700 46.300-53.700 72.400 0 73.700 68 81.200 82.600 81.200 7.900 0 19.800-2.300 26.900-4.500l1.300-.4a128 128 0 0 0 66.400-52.700 4 4 0 0 0-5.300-5.700z"/><path fill="url(#eb)" d="M105.700 241.400a79.200 79.200 0 0 1-22.700-21.300 80.700 80.700 0 0 1 29.500-120c3.100-1.500 8.500-4.100 15.600-4a32.400 32.400 0 0 1 25.700 13 31.900 31.900 0 0 1 6.400 18.700c0-.2 24.500-79.900-80.300-79.900-44 0-80.200 41.800-80.200 78.400a130.600 130.600 0 0 0 12.100 56.200 128 128 0 0 0 156.400 67.100 75.500 75.500 0 0 1-62.400-8.200z"/><path fill="url(#ec)" d="M152.300 148.900c-.8 1-3.300 2.500-3.300 5.700 0 2.600 1.700 5.100 4.700 7.200 14.400 10 41.500 8.700 41.600 8.700a59.600 59.600 0 0 0 30.300-8.400 61.400 61.400 0 0 0 30.400-52.900c.3-22.400-8-37.300-11.300-43.900C223.500 24.100 177.600 0 128 0A128 128 0 0 0 0 126.200c.5-36.500 36.800-66 80-66 3.500 0 23.500.3 42 10.100 16.300 8.600 24.900 18.900 30.800 29.200 6.200 10.700 7.300 24.100 7.300 29.500s-2.700 13.300-7.800 19.900z"/><circle cx="64" cy="202" r="60" fill="#2a8c7c"/><path d="M40 160l14 40 8-6 12-36 4 44c10 10 8 40-14 52-26 4-34-30-20-50z" fill="#efe3c8"/></svg>
<svg style="left:518.4px;top:904.200px" width="25.800" height="26.200" viewBox="0 0 256 260"><path fill="url(#ea)" d="M231 190.500c-3.400 1.800-6.900 3.400-10.500 4.700a101.500 101.500 0 0 1-35.800 6.400c-47.200 0-88.300-32.500-88.300-74.100a31.400 31.400 0 0 1 16.400-27.300c-42.700 1.800-53.700 46.300-53.700 72.400 0 73.700 68 81.200 82.600 81.200 7.900 0 19.800-2.300 26.900-4.500l1.300-.4a128 128 0 0 0 66.400-52.700 4 4 0 0 0-5.300-5.700z"/><path fill="url(#eb)" d="M105.700 241.400a79.200 79.200 0 0 1-22.700-21.300 80.700 80.700 0 0 1 29.500-120c3.100-1.500 8.500-4.100 15.600-4a32.400 32.400 0 0 1 25.700 13 31.900 31.900 0 0 1 6.400 18.700c0-.2 24.500-79.900-80.300-79.900-44 0-80.200 41.800-80.200 78.400a130.600 130.600 0 0 0 12.100 56.200 128 128 0 0 0 156.400 67.100 75.500 75.500 0 0 1-62.400-8.200z"/><path fill="url(#ec)" d="M152.300 148.900c-.8 1-3.300 2.500-3.300 5.700 0 2.600 1.700 5.100 4.700 7.200 14.400 10 41.500 8.700 41.600 8.700a59.600 59.600 0 0 0 30.300-8.400 61.400 61.400 0 0 0 30.400-52.900c.3-22.400-8-37.300-11.300-43.900C223.500 24.100 177.600 0 128 0A128 128 0 0 0 0 126.200c.5-36.500 36.800-66 80-66 3.500 0 23.500.3 42 10.100 16.300 8.600 24.900 18.900 30.800 29.200 6.200 10.700 7.300 24.100 7.300 29.500s-2.700 13.300-7.800 19.900z"/><circle cx="64" cy="202" r="60" fill="#b9d568"/><path d="M28 180c24-16 52-12 70 4l-40 66z" fill="#f2a52a"/><path d="M26 182c24-18 54-14 74 4" stroke="#c7731d" stroke-width="10" fill="none"/><circle cx="56" cy="200" r="7" fill="#c62828"/><circle cx="74" cy="206" r="6" fill="#c62828"/></svg>
<svg style="left:1013px;top:905px" width="28" height="24" viewBox="0 0 28 24"><defs><radialGradient id="sun" cx=".4" cy=".35" r=".7"><stop offset="0" stop-color="#ffc23a"/><stop offset="1" stop-color="#f28a1c"/></radialGradient></defs><circle cx="11.300" cy="12" r="10.200" fill="url(#sun)"/><path d="M13.500 19c-2.200 0-3.600-1.300-3.600-2.900 0-1.500 1.200-2.700 2.800-2.800.5-1.900 2.200-3.200 4.200-3.200 2 0 3.700 1.200 4.300 3 2 .1 3.500 1.400 3.500 3 0 1.700-1.400 2.900-3.400 2.900z" fill="#a9d0f5"/><path d="M13.500 19c-2.200 0-3.600-1.300-3.600-2.900 0-.5.100-.9.300-1.300 1 1.600 3 2.200 5 2.200h9.400c-.3 1.200-1.600 2-3.300 2z" fill="#7fb2ea"/></svg>
<span class="t" style="left:1046.5px;top:910.4px;font-size:14.2px;color:#fff;letter-spacing:0.00px;transform:scaleX(0.9652);">32°C</span>
<span class="t" style="left:1086.6px;top:910.4px;font-size:14.2px;color:#fff;letter-spacing:0.13px;transform:scaleX(0.9994);">Mayorm. soleado</span>
<svg style="left:1222px;top:913px" width="13" height="8" viewBox="0 0 13 8"><path d="M.7 7.300L6.500 1.400 12.300 7.300" fill="none" stroke="#fff" stroke-width="1.300"/></svg>
<svg style="left:1245px;top:908px" width="17" height="18" viewBox="0 0 17 18"><path d="M1 17C3 9 8 2.500 16 .8 15.500 8 10.500 13 4.500 14.200z" fill="#9a5fd8"/><path d="M1 17C5 10 9.500 5.500 14 2.500" stroke="#d8b6f5" stroke-width="1" fill="none"/></svg>
<svg style="left:1270px;top:907px" width="17" height="20" viewBox="0 0 17 20"><rect x="1.600" y="4.600" width="9.500" height="10.500" rx="2.200" fill="none" stroke="#fff" stroke-width="1.200"/><circle cx="6.300" cy="8.800" r="1.600" fill="none" stroke="#fff" stroke-width="1"/><path d="M3.600 13.600c.4-2 4.800-2 5.400 0M11.400 8.600l3.800-2v6.600l-3.800-2M3 2.500C5.500.8 8 .8 10.200 2.500M3 17.500c2.500 1.600 5 1.600 7.200 0" fill="none" stroke="#fff" stroke-width="1"/></svg>
<svg style="left:1294px;top:909px" width="19" height="17" viewBox="0 0 19 17"><rect x="4.600" y=".8" width="13.600" height="9.600" fill="none" stroke="#fff" stroke-width="1.200"/><path d="M11.400 10.400v3.400M7.500 14.400h8" stroke="#fff" stroke-width="1.200"/><rect x=".7" y="2.800" width="3.800" height="5" fill="#3d2a26" stroke="#fff" stroke-width="1.100"/><path d="M2.600 7.800v6.600h3.600" fill="none" stroke="#fff" stroke-width="1.100"/></svg>
<svg style="left:1319px;top:909px" width="19" height="16" viewBox="0 0 19 16"><path d="M.8 5.600h3L8 1.600v12.800L3.800 10.400h-3z" fill="none" stroke="#fff" stroke-width="1.150" stroke-linejoin="round"/><path d="M10.600 5.400c1.200 1.400 1.200 3.800 0 5.200M13 3.400c2.200 2.600 2.200 6.600 0 9.200M15.400 1.400c3.200 3.800 3.200 9.400 0 13.200" fill="none" stroke="#fff" stroke-width="1.100" stroke-linecap="round"/></svg>
<span class="t" style="left:1347.7px;top:902.1px;font-size:12.2px;color:#fff;letter-spacing:0.00px;transform:scaleX(0.8856);">ENG</span>
<span class="t" style="left:1347.7px;top:919.7px;font-size:12.2px;color:#fff;letter-spacing:0.00px;transform:scaleX(0.8932);">INTL</span>
<span class="t" style="left:1390.0px;top:902.1px;font-size:12.2px;color:#fff;letter-spacing:0.00px;transform:scaleX(0.9517);">2:48 PM</span>
<span class="t" style="left:1385.8px;top:919.7px;font-size:12.2px;color:#fff;letter-spacing:0.00px;transform:scaleX(0.9754);">10/9/2025</span>
<svg style="left:1458px;top:909px" width="18" height="18" viewBox="0 0 18 18"><path d="M0 0h16v12.200H9.800L5.400 16.600V12.200H0z" fill="#fff"/><path d="M3 3.600h10M3 6.200h10M3 8.800h6.500" stroke="#2b1d1d" stroke-width="1.150"/><circle cx="13.400" cy="13.600" r="3.700" fill="#2f201f"/><circle cx="13.400" cy="13.600" r="2.500" fill="none" stroke="#fff" stroke-width="1.100"/><path d="M11.800 15.200l3.200-3.200" stroke="#fff" stroke-width="1"/></svg>
<div class="a" style="left:1494.5px;top:897px;width:1px;height:41px;background:#8d8484"></div>
</body></html>
